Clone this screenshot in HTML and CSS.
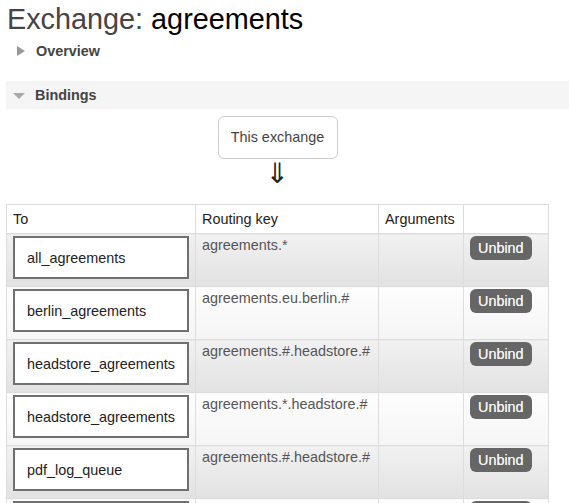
FILE: index.html
```html
<!DOCTYPE html>
<html>
<head>
<meta charset="utf-8">
<link rel="stylesheet" href="styles.css">
</head>
<body>
<h1 class="title"><span class="title-label">Exchange:</span> agreements</h1>
<div class="section closed">
  <h2 class="section-head"><span class="tri-right"></span>Overview</h2>
</div>
<div class="section open">
  <h2 class="section-head bar"><span class="tri-down"></span>Bindings</h2>
  <div class="bindings">
    <div class="source"><span class="source-box">This exchange</span></div>
    <div class="arrow">&dArr;</div>
    <table class="list">
      <thead>
        <tr><th class="c-to">To</th><th class="c-key">Routing key</th><th class="c-args">Arguments</th><th class="c-act"></th></tr>
      </thead>
      <tbody>
        <tr class="odd"><td><span class="queue">all_agreements</span></td><td class="key">agreements.*</td><td></td><td><span class="btn">Unbind</span></td></tr>
        <tr class="even"><td><span class="queue">berlin_agreements</span></td><td class="key">agreements.eu.berlin.#</td><td></td><td><span class="btn">Unbind</span></td></tr>
        <tr class="odd"><td><span class="queue">headstore_agreements</span></td><td class="key">agreements.#.headstore.#</td><td></td><td><span class="btn">Unbind</span></td></tr>
        <tr class="even"><td><span class="queue">headstore_agreements</span></td><td class="key">agreements.*.headstore.#</td><td></td><td><span class="btn">Unbind</span></td></tr>
        <tr class="odd"><td><span class="queue">pdf_log_queue</span></td><td class="key">agreements.#.headstore.#</td><td></td><td><span class="btn">Unbind</span></td></tr>
        <tr class="even"><td><span class="queue"></span></td><td class="key"></td><td></td><td><span class="btn btn-empty"></span></td></tr>
      </tbody>
    </table>
  </div>
</div>
</body>
</html>
```
FILE: styles.css
```css
html, body {
  margin: 0;
  padding: 0;
  background: #fff;
}
body {
  font-family: "Liberation Sans", Arial, sans-serif;
  font-size: 14.4px;
  color: #444;
}
.title {
  margin: 0;
  padding: 3px 0 0 7px;
  font-size: 28.8px;
  line-height: 32px;
  font-weight: normal;
  color: #000;
}
.title-label {
  color: #444;
}
.section-head {
  margin: 0;
  font-size: 14.4px;
  font-weight: bold;
  color: #444;
  display: flex;
  align-items: center;
}
.closed .section-head {
  margin-top: 6px;
  padding-left: 17px;
  line-height: 20px;
}
.tri-right {
  width: 0;
  height: 0;
  border-top: 5.5px solid transparent;
  border-bottom: 5.5px solid transparent;
  border-left: 8px solid #999;
  margin-right: 11px;
  margin-top: -1px;
}
.open {
  margin-top: 20px;
  margin-left: 6px;
}
.bar {
  background: #f5f5f5;
  height: 28px;
  line-height: 28px;
  padding-left: 7px;
}
.tri-down {
  width: 0;
  height: 0;
  border-left: 6.5px solid transparent;
  border-right: 6.5px solid transparent;
  border-top: 6px solid #aaa;
  margin-right: 10px;
  margin-top: 2px;
}
.bindings {
  width: 543px;
}
.source {
  display: flex;
  justify-content: center;
  margin-top: 7px;
}
.source-box {
  display: block;
  width: 120px;
  height: 43px;
  box-sizing: border-box;
  border: 1px solid #ccc;
  border-radius: 6px;
  text-align: center;
  line-height: 41px;
  color: #444;
  background: #fff;
}
.arrow {
  text-align: center;
  font-family: "DejaVu Sans", sans-serif;
  font-size: 28px;
  line-height: 30px;
  height: 30px;
  color: #222;
  margin-top: 0;
  margin-bottom: 15px;
}
.list {
  border-collapse: collapse;
  width: 543px;
  table-layout: fixed;
}
.list th, .list td {
  border: 1px solid #ddd;
  text-align: left;
  vertical-align: top;
}
.list th {
  font-weight: normal;
  color: #222;
  height: 28px;
  padding: 0 6px;
  vertical-align: middle;
  background: #fff;
}
.c-to { width: 176px; }
.c-key { width: 170px; }
.c-args { width: 72px; }
.list td {
  padding: 2px 6px 7px;
  height: 43px;
}
.list td.key {
  padding-top: 3px;
  height: 42px;
  color: #555;
  line-height: 16.5px;
}
.odd td {
  background: linear-gradient(to bottom, #f1f1f1, #e2e2e2);
}
.even td {
  background: linear-gradient(to bottom, #fdfdfd, #f5f5f5);
}
.queue {
  display: flex;
  align-items: center;
  box-sizing: border-box;
  height: 43px;
  width: 100%;
  border: 2px solid #707070;
  background: #fff;
  padding-left: 12px;
  color: #222;
  white-space: nowrap;
}
.btn {
  display: inline-block;
  height: 24px;
  line-height: 24px;
  padding: 0 8px;
  background: #666;
  color: #f2f2f2;
  border-radius: 6px;
  text-shadow: 0 0 0.4px #f2f2f2;
}
.btn-empty {
  width: 46px;
}
```
